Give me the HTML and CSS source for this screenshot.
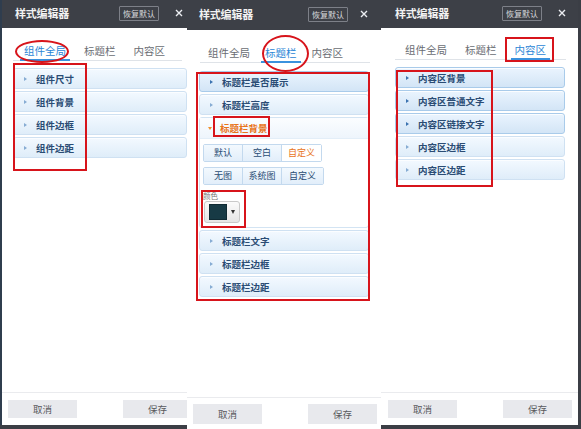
FILE: index.html
```html
<!DOCTYPE html>
<html lang="zh">
<head>
<meta charset="utf-8">
<title>样式编辑器</title>
<link rel="stylesheet" href="styles.css">
</head>
<body>
<div class="stage">
  <section class="panel p1">
    <header class="bar">
      <h1 class="title">样式编辑器</h1>
      <button class="reset">恢复默认</button>
      <svg class="close" viewBox="0 0 8 8" width="8" height="8"><path d="M1 1L7 7M7 1L1 7" stroke="#eceef2" stroke-width="1.4" fill="none"/></svg>
    </header>
    <nav class="tabs">
      <span class="tab active">组件全局</span><span class="tab">标题栏</span><span class="tab">内容区</span>
    </nav>
    <ul class="list">
      <li class="item"><i class="arr"></i>组件尺寸</li>
      <li class="item"><i class="arr"></i>组件背景</li>
      <li class="item"><i class="arr"></i>组件边框</li>
      <li class="item"><i class="arr"></i>组件边距</li>
    </ul>
    <footer class="foot"><button class="btn">取消</button><button class="btn">保存</button></footer>
  </section>

  <section class="panel p2">
    <header class="bar">
      <h1 class="title">样式编辑器</h1>
      <button class="reset">恢复默认</button>
      <svg class="close" viewBox="0 0 8 8" width="8" height="8"><path d="M1 1L7 7M7 1L1 7" stroke="#eceef2" stroke-width="1.4" fill="none"/></svg>
    </header>
    <nav class="tabs">
      <span class="tab">组件全局</span><span class="tab active">标题栏</span><span class="tab">内容区</span>
    </nav>
    <ul class="list">
      <li class="item item-hi"><i class="arr"></i>标题栏是否展示</li>
      <li class="item"><i class="arr"></i>标题栏高度</li>
      <li class="open">
        <div class="open-head"><i class="arr-down"></i>标题栏背景</div>
        <div class="open-body">
          <div class="seg"><span class="seg-btn">默认</span><span class="seg-btn">空白</span><span class="seg-btn on">自定义</span></div>
          <div class="seg"><span class="seg-btn">无图</span><span class="seg-btn">系统图</span><span class="seg-btn">自定义</span></div>
          <div class="label">颜色</div>
          <div class="picker"><span class="swatch"></span><span class="caret"></span></div>
        </div>
      </li>
      <li class="item"><i class="arr"></i>标题栏文字</li>
      <li class="item"><i class="arr"></i>标题栏边框</li>
      <li class="item"><i class="arr"></i>标题栏边距</li>
    </ul>
    <footer class="foot"><button class="btn">取消</button><button class="btn">保存</button></footer>
  </section>

  <section class="panel p3">
    <header class="bar">
      <h1 class="title">样式编辑器</h1>
      <button class="reset">恢复默认</button>
      <svg class="close" viewBox="0 0 8 8" width="8" height="8"><path d="M1 1L7 7M7 1L1 7" stroke="#eceef2" stroke-width="1.4" fill="none"/></svg>
    </header>
    <nav class="tabs">
      <span class="tab">组件全局</span><span class="tab">标题栏</span><span class="tab active">内容区</span>
    </nav>
    <ul class="list">
      <li class="item item-hi"><i class="arr"></i>内容区背景</li>
      <li class="item item-hi"><i class="arr"></i>内容区普通文字</li>
      <li class="item item-hi"><i class="arr"></i>内容区链接文字</li>
      <li class="item"><i class="arr"></i>内容区边框</li>
      <li class="item"><i class="arr"></i>内容区边距</li>
    </ul>
    <footer class="foot"><button class="btn">取消</button><button class="btn">保存</button></footer>
  </section>

  <div class="mark ring m1"></div>
  <div class="mark m2"></div>
  <div class="mark ring m3"></div>
  <div class="mark m4"></div>
  <div class="mark m5"></div>
  <div class="mark m6"></div>
  <div class="mark m7"></div>
  <div class="mark m8"></div>
</div>
</body>
</html>
```

FILE: styles.css
```css
* { box-sizing: border-box; }
html, body { margin: 0; padding: 0; }
body {
  width: 581px;
  height: 429px;
  overflow: hidden;
  background: #3b3e45;
  font-family: "Noto Sans CJK SC", "Noto Sans", sans-serif;
}
.stage {
  position: relative;
  display: flex;
  align-items: flex-start;
  width: 581px;
  height: 429px;
}
.panel {
  display: flex;
  flex-direction: column;
  background: #fff;
  overflow: hidden;
}
.p1 { width: 187px; height: 425px; border-left: 2px solid #2f3d4e; }
.p2 { width: 194px; height: 429px; }
.p3 { width: 200px; height: 427px; border-right: 3px solid #3b3e45; border-bottom: 2px solid #3b3e45; }

/* header */
.bar {
  display: flex;
  align-items: center;
  height: 28px;
  padding: 0 4px 2px 13px;
  background: #3d4047;
}
.p2 .bar { padding-left: 12px; padding-right: 13px; height: 30px; }
.p3 .bar { padding-left: 14px; padding-right: 12px; }
.title {
  margin: 0;
  font-size: 11px;
  font-weight: 700;
  color: #f2f2f2;
  letter-spacing: -0.2px;
}
.reset {
  margin-left: auto;
  height: 15px;
  padding: 0 3px;
  border: 1px solid #7d8088;
  border-radius: 1px;
  background: transparent;
  color: #d8d9dc;
  font-family: inherit;
  font-size: 8px;
  line-height: 13px;
}
.close { margin-left: 16px; display: block; }
.p2 .close { margin-left: 12px; }

/* tabs */
.tabs {
  display: flex;
  margin: 17px 7px 0 11px;
  padding-left: 7px;
  border-bottom: 1px solid #dfe3e8;
}
.p1 .tabs { margin-top: 16px; margin-right: 5px; }
.p2 .tabs { margin: 16px 11px 0 13px; padding-left: 4px; }
.p3 .tabs { margin: 15px 12px 0 14px; padding-left: 6px; }
.tab {
  padding: 0 4px 1px;
  margin-right: 10px;
  margin-bottom: -1px;
  font-size: 10.5px;
  line-height: 14px;
  color: #6a6d73;
  border-bottom: 2px solid transparent;
}
.p2 .tab { margin-right: 7px; }
.tab.active { color: #2b86d6; border-bottom-color: #3a92de; }

/* list */
.list {
  list-style: none;
  margin: 7px 0 0 11px;
  padding: 0;
}
.p1 .list { margin-right: 0; }
.p2 .list { margin: 8px 12px 0 12px; }
.p3 .list { margin: 7px 13px 0 14px; }
.item {
  display: flex;
  align-items: center;
  height: 21px;
  margin-bottom: 2px;
  padding-left: 10px;
  border: 1px solid #cfe1f2;
  border-radius: 3px;
  background: linear-gradient(#f3f9ff, #dfedf9);
  box-shadow: inset 0 1px 0 #fbfdff;
  font-size: 9.5px;
  font-weight: 700;
  color: #2a4c74;
}
.item-hi { border-color: #a9cbea; background: linear-gradient(#eaf4fe, #d3e5f6); }
.arr {
  width: 0;
  height: 0;
  margin-right: 9px;
  border-left: 3px solid #86acd3;
  border-top: 2.5px solid transparent;
  border-bottom: 2.5px solid transparent;
}
.item-hi .arr { border-left-color: #3a72b0; }

/* open section */
.open {
  margin-bottom: 2px;
  border: 1px solid #d3e4f3;
  border-radius: 3px;
  background: #fff;
}
.open-head {
  display: flex;
  align-items: center;
  height: 21px;
  padding-left: 8px;
  background: linear-gradient(#fbfdff, #eef5fc);
  border-bottom: 1px solid #e3eef8;
  font-size: 9.5px;
  font-weight: 700;
  color: #e8741a;
}
.arr-down {
  width: 0;
  height: 0;
  margin-right: 8px;
  border-top: 3px solid #f0922e;
  border-left: 2.5px solid transparent;
  border-right: 2.5px solid transparent;
}
.open-body {
  display: flex;
  flex-direction: column;
  align-items: flex-start;
  padding: 5px 4px 4px 3px;
}
.seg {
  display: flex;
  margin-bottom: 5px;
  border: 1px solid #c3d9ee;
  border-radius: 2px;
}
.seg:nth-child(2) { margin-bottom: 0; }
.seg-btn {
  width: 39px;
  height: 16px;
  line-height: 16px;
  text-align: center;
  font-size: 9px;
  color: #2a4d74;
  background: linear-gradient(#f3f9fe, #e2eefa);
  border-right: 1px solid #c3d9ee;
}
.seg:nth-child(2) .seg-btn:last-child { width: 41px; }
.seg-btn:last-child { border-right: 0; }
.seg-btn.on { background: #fff; color: #e8741a; }
.label {
  margin-top: 6px;
  height: 10px;
  font-size: 7.5px;
  line-height: 10px;
  color: #7a7a7a;
}
.picker {
  display: flex;
  align-items: center;
  width: 36px;
  height: 22px;
  margin-left: 1px;
  padding-left: 4px;
  border: 1px solid #c9c9c9;
  border-radius: 3px;
  background: linear-gradient(#fbfbfb, #e5e5e5);
}
.swatch {
  width: 18px;
  height: 16px;
  background: #173a45;
  border: 1px solid #0f2a33;
}
.caret {
  width: 0;
  height: 0;
  margin-left: 4px;
  border-top: 4px solid #333;
  border-left: 2.5px solid transparent;
  border-right: 2.5px solid transparent;
}

/* footer */
.foot {
  display: flex;
  gap: 46px;
  margin-top: auto;
  padding: 7px 6px;
  border-top: 1px solid #eaebee;
}
.p2 .foot { padding: 6px 6px 5px; }
.p3 .foot { padding-left: 7px; }
.btn {
  flex: none;
  width: 69px;
  height: 18px;
  border: 0;
  background: #e8e9ed;
  color: #58595d;
  font-family: inherit;
  font-size: 9.5px;
  line-height: 18px;
  padding: 0;
}
.p2 .btn { height: 20px; }

/* red annotation marks */
.mark {
  position: absolute;
  border: 2px solid #d7141b;
}
.ring { border-radius: 50%; }
.m1 { left: 15px; top: 40px; width: 54px; height: 23px; }
.m2 { left: 13px; top: 63px; width: 74px; height: 108px; }
.m3 { left: 262px; top: 35px; width: 47px; height: 37px; }
.m4 { left: 196px; top: 72px; width: 174px; height: 229px; }
.m5 { left: 213px; top: 116px; width: 57px; height: 21px; }
.m6 { left: 201px; top: 190px; width: 45px; height: 38px; }
.m7 { left: 505px; top: 37px; width: 49px; height: 25px; }
.m8 { left: 396px; top: 70px; width: 97px; height: 117px; }
```
